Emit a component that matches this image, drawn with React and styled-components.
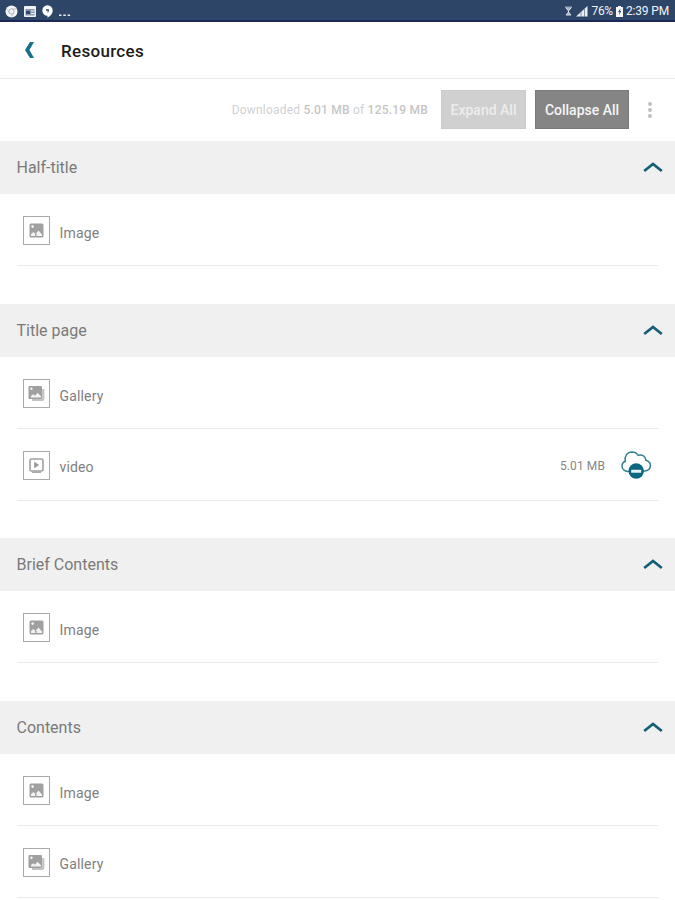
import React from "react";
import styled, { createGlobalStyle } from "styled-components";

const Global = createGlobalStyle`
  * { box-sizing: border-box; }
  body { margin: 0; background: #fff; font-family: Roboto, sans-serif; }
`;
const Screen = styled.div`
  width: 675px; height: 900px; overflow: hidden; background: #fff;
  display: flex; flex-direction: column;
`;
const StatusBar = styled.div`
  height: 22px; flex: none; background: #2d4668; border-bottom: 2px solid #1b2856;
  display: flex; justify-content: space-between; padding: 0 6px 0 5px; color: #f1f4f8;
`;
const StatusGroup = styled.div`
  display: flex; align-items: center; height: 22px; gap: ${p => p.$gap}px;
  svg { display: block; flex: none; }
`;
const StatusText = styled.span`
  font-size: 12px; line-height: 22px; letter-spacing: ${p => p.$spacing || 0}px; white-space: nowrap;
`;
const Header = styled.header`
  height: 57px; flex: none; display: flex; align-items: center; padding-left: 24px;
  border-bottom: 1px solid #e9e9e9;
  svg { display: block; }
`;
const Title = styled.h1`
  margin: 0 0 0 26px; padding-top: 1px; font-size: 17px; line-height: 24px; font-weight: 500; color: #1c1c1c; letter-spacing: 0.3px;
`;
const Toolbar = styled.div`
  height: 62px; flex: none; display: flex; align-items: center; justify-content: flex-end; padding: 0 21px 1px 0;
`;
const Usage = styled.div`
  margin-right: 13px; font-size: 12px; color: #d2d2d2; letter-spacing: 0.21px; padding-top: 1px; white-space: nowrap;
  b { font-weight: 500; color: #c6c6c6; }
`;
const Button = styled.button`
  width: ${p => p.$width}px; height: 39px; padding: 0; margin-right: ${p => p.$after}px;
  border: 1px solid ${p => (p.$active ? "#7a7a7a" : "#cbcbcb")}; background: ${p => (p.$active ? "#858585" : "#d0d0d0")};
  color: ${p => (p.$active ? "#f5f5f5" : "#ededed")};
  font: 500 14px Roboto, sans-serif; white-space: nowrap;
`;
const Section = styled.section`
  flex: none; height: ${p => p.$height}px;
`;
const SectionHeader = styled.div`
  height: 53px; background: #f0f0f0; display: flex; align-items: center; justify-content: space-between;
  padding: 0 12px 0 16.500px; font-size: 16px; color: #7a7a7a;
  svg { display: block; margin-bottom: 2px; }
`;
const Row = styled.div`
  height: 72px; margin: 0 17px; padding: 2px 6px 0; border-bottom: 1px solid #e9e9e9;
  display: flex; align-items: center;
`;
const IconBox = styled.div`
  width: 27px; height: 29px; border: 1px solid #aaa; display: flex; align-items: center; justify-content: center;
  svg { display: block; }
`;
const RowLabel = styled.span`
  margin-left: 9.500px; padding-top: ${p => (p.$raised ? 2 : 4)}px; font-size: 14px; line-height: 18px; color: #808080; letter-spacing: 0.15px;
`;
const Download = styled.div`
  margin-left: auto; display: flex; align-items: center; gap: 15px; font-size: 12px; color: #858585; letter-spacing: 0.1px;
  svg { display: block; margin-bottom: 1px; }
`;

const BackIcon = () => (
  <svg width="11" height="20" viewBox="0 0 11 20"><path d="M6 2h4L5.400 10 10 18H6L1 10z" fill="#16708a" /></svg>
);
const ChevronUp = () => (
  <svg width="20" height="12" viewBox="0 0 20 12"><path d="M1.200 10 10 3l8.800 7" fill="none" stroke="#155d78" strokeWidth="2.700" /></svg>
);
const MoreIcon = () => (
  <svg width="8" height="18" viewBox="0 0 8 18" fill="#bdbdbd"><circle cx="4" cy="3" r="1.900" /><circle cx="4" cy="9" r="1.900" /><circle cx="4" cy="15" r="1.900" /></svg>
);
const ImageIcon = () => (
  <svg width="15" height="15" viewBox="0 0 15 15">
    <rect x="0.500" y="0.500" width="14" height="14" rx="1.500" fill="#a0a0a0" />
    <circle cx="3.600" cy="3.600" r="1.300" fill="#f3f3f3" />
    <path d="M2 13v-2l2.500-2 2 2 3-3.500 3.500 4V13z" fill="#f3f3f3" />
    <path d="M6 13V10.200l2.500 1.800z" fill="#a0a0a0" />
  </svg>
);
const GalleryIcon = () => (
  <svg width="17" height="17" viewBox="0 0 17 17">
    <path d="M4 15h9.500c1.100 0 1.800-.7 1.800-1.800V4" fill="none" stroke="#c2c2c2" strokeWidth="2.200" />
    <rect x="0.500" y="1" width="13.500" height="13" rx="1" fill="#a0a0a0" />
    <circle cx="3.400" cy="3.800" r="1.200" fill="#f3f3f3" />
    <path d="M3 12.500V11l2.200-1.800 1.800 1.500 2.500-3 3.500 3.500v1.300z" fill="#f3f3f3" />
  </svg>
);
const VideoIcon = () => (
  <svg width="15" height="15" viewBox="0 0 15 15">
    <rect x="1" y="1" width="13" height="12" rx="1.500" fill="none" stroke="#a0a0a0" strokeWidth="1.600" />
    <path d="M3 14.300h9" stroke="#a0a0a0" strokeWidth="1.200" />
    <path d="m5.200 3.800 5 3.200-5 3.200z" fill="#999" />
  </svg>
);
const CloudRemoveIcon = () => (
  <svg width="32" height="30" viewBox="0 0 32 30">
    <path d="M9 21.500H7.500C4 21 1.800 18.500 2 15.500c.1-2 1.200-3.500 3.300-4.300C4.300 6 7.300 2 11.800 2c3 .1 5.200 1.200 6.400 3.300 4.400-1 7.200 1 7.700 5 3 .8 4.500 2.700 4.500 5.200 0 3-2.100 5-5.400 5.600h-2" fill="none" stroke="#35808f" strokeWidth="1.500" />
    <circle cx="16.200" cy="21" r="7.700" fill="#0d6680" />
    <rect x="11.200" y="19.700" width="10" height="3" rx="0.500" fill="#e7f2f5" />
  </svg>
);
const icons = { Image: ImageIcon, Gallery: GalleryIcon, video: VideoIcon };

const sections = [
  { title: "Half-title", height: 163, rows: [{ type: "Image" }] },
  { title: "Title page", height: 234, rows: [{ type: "Gallery" }, { type: "video", size: "5.01 MB" }] },
  { title: "Brief Contents", height: 163, rows: [{ type: "Image" }] },
  { title: "Contents", height: 200, rows: [{ type: "Image" }, { type: "Gallery" }] },
];

function ResourceRow({ type, size, raised }) {
  const Icon = icons[type];
  return (
    <Row>
      <IconBox><Icon /></IconBox>
      <RowLabel $raised={raised}>{type}</RowLabel>
      {size && <Download>{size}<CloudRemoveIcon /></Download>}
    </Row>
  );
}

export default function App() {
  return (
    <Screen>
      <Global />
      <StatusBar>
        <StatusGroup $gap={6}>
          <svg width="13" height="13" viewBox="0 0 13 13"><circle cx="6.500" cy="6.500" r="6" fill="#f4f5f7" /><circle cx="6.500" cy="6.500" r="2.600" fill="none" stroke="#a9b3c1" /><path d="M6.500 4H11M4.300 7.800 2.400 4.500M8.700 7.800 6.500 11.500" stroke="#b7c0cc" /></svg>
          <svg width="12" height="11" viewBox="0 0 12 11"><rect width="12" height="11" rx="1" fill="#f0f3f6" /><rect x="1.500" y="3" width="9" height="6.500" fill="#8997ab" /><rect x="2" y="5" width="4" height="3" fill="#2d4668" /><path d="M7 5h3M7 7.500h3" stroke="#f0f3f6" /></svg>
          <svg width="11" height="13" viewBox="0 0 11 13"><path d="M5.500.3a5.200 5.200 0 0 1 5.200 5.200c0 3-2.200 5.700-5.200 7.200v-2a5.200 5.200 0 0 1 0-10.400z" fill="#fff" /><path d="M4 4h3v2.500L5.500 8V6H4z" fill="#5c708b" /></svg>
          <svg width="12" height="13" viewBox="0 0 12 13" fill="#e7ebf0"><rect x="0" y="9.500" width="2.500" height="1.500" /><rect x="4.300" y="9.500" width="2.500" height="1.500" /><rect x="8.600" y="9.500" width="2.500" height="1.500" /></svg>
        </StatusGroup>
        <StatusGroup $gap={3}>
          <svg width="9" height="10" viewBox="0 0 8 10"><path d="M.5 1.200h7M1.500 2 4 5l2.500-3M4 4.500v2M1.500 9 4 6l2.500 3z" fill="#aeb9c7" stroke="#d3dae2" /></svg>
          <svg width="12" height="11" viewBox="0 0 12 11"><path d="M0 10.500 11.500 0v10.500z" fill="#e9edf1" /><path d="M5 5v6M8.500 2v9" stroke="#5b6f8a" strokeWidth=".7" /></svg>
          <StatusText $spacing={-0.3}>76%</StatusText>
          <svg width="7" height="11" viewBox="0 0 7 11"><path d="M2 0h3v1h2v10H0V1h2z" fill="#f5f6f8" /><path d="M4.500 2.500 2 6h1.500L3 9l2.300-4H4z" fill="#2d4668" /></svg>
          <StatusText $spacing={-0.15}>2:39 PM</StatusText>
        </StatusGroup>
      </StatusBar>
      <Header><BackIcon /><Title>Resources</Title></Header>
      <Toolbar>
        <Usage>Downloaded <b>5.01 MB</b> of <b>125.19 MB</b></Usage>
        <Button $width={85} $after={9}>Expand All</Button>
        <Button $width={94} $after={17} $active>Collapse All</Button>
        <MoreIcon />
      </Toolbar>
      {sections.map(s => (
        <Section key={s.title} $height={s.height}>
          <SectionHeader>{s.title}<ChevronUp /></SectionHeader>
          {s.rows.map((r, i) => <ResourceRow key={r.type} {...r} raised={i > 0} />)}
        </Section>
      ))}
    </Screen>
  );
}
